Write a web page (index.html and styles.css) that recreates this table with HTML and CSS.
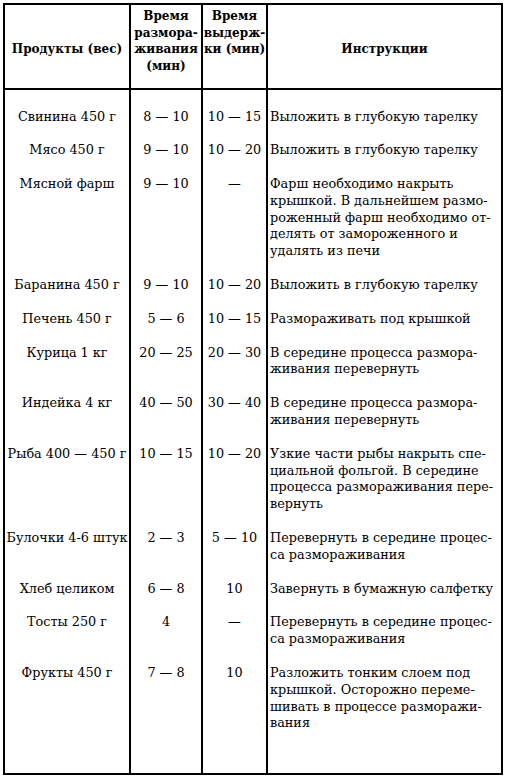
FILE: index.html
```html
<!DOCTYPE html>
<html lang="ru">
<head>
<meta charset="utf-8">
<title>Размораживание</title>
<link rel="stylesheet" href="styles.css">
</head>
<body>
<table class="tbl">
  <colgroup>
    <col class="c1"><col class="c2"><col class="c3"><col class="c4">
  </colgroup>
  <thead>
    <tr class="head">
      <th class="mid">Продукты (вес)</th>
      <th>Время<br>размора-<br>живания<br>(мин)</th>
      <th>Время<br>выдерж-<br>ки (мин)</th>
      <th class="mid">Инструкции</th>
    </tr>
  </thead>
  <tbody>
    <tr class="first"><td>Свинина 450 г</td><td>8 — 10</td><td>10 — 15</td><td class="ins">Выложить в глубокую тарелку</td></tr>
    <tr><td>Мясо 450 г</td><td>9 — 10</td><td>10 — 20</td><td class="ins">Выложить в глубокую тарелку</td></tr>
    <tr><td>Мясной фарш</td><td>9 — 10</td><td>—</td><td class="ins">Фарш необходимо накрыть<br>крышкой. В дальнейшем размо-<br>роженный фарш необходимо от-<br>делять от замороженного и<br>удалять из печи</td></tr>
    <tr><td>Баранина 450 г</td><td>9 — 10</td><td>10 — 20</td><td class="ins">Выложить в глубокую тарелку</td></tr>
    <tr><td>Печень 450 г</td><td>5 — 6</td><td>10 — 15</td><td class="ins">Размораживать под крышкой</td></tr>
    <tr><td>Курица 1 кг</td><td>20 — 25</td><td>20 — 30</td><td class="ins">В середине процесса размора-<br>живания перевернуть</td></tr>
    <tr><td>Индейка 4 кг</td><td>40 — 50</td><td>30 — 40</td><td class="ins">В середине процесса размора-<br>живания перевернуть</td></tr>
    <tr><td>Рыба 400 — 450 г</td><td>10 — 15</td><td>10 — 20</td><td class="ins">Узкие части рыбы накрыть спе-<br>циальной фольгой. В середине<br>процесса размораживания пере-<br>вернуть</td></tr>
    <tr><td>Булочки 4-6 штук</td><td>2 — 3</td><td>5 — 10</td><td class="ins">Перевернуть в середине процес-<br>са размораживания</td></tr>
    <tr><td>Хлеб целиком</td><td>6 — 8</td><td>10</td><td class="ins">Завернуть в бумажную салфетку</td></tr>
    <tr><td>Тосты 250 г</td><td>4</td><td>—</td><td class="ins">Перевернуть в середине процес-<br>са размораживания</td></tr>
    <tr class="last"><td>Фрукты 450 г</td><td>7 — 8</td><td>10</td><td class="ins">Разложить тонким слоем под<br>крышкой. Осторожно переме-<br>шивать в процессе разморажи-<br>вания</td></tr>
  </tbody>
</table>
</body>
</html>
```
FILE: styles.css
```css
html, body {
  margin: 0;
  padding: 0;
  background: #ffffff;
}
body {
  padding: 3px 0 0 3px;
  font-family: "DejaVu Serif", "Liberation Serif", serif;
  font-size: 12px;
  color: #000;
}
.tbl {
  border-collapse: collapse;
  table-layout: fixed;
  width: 498px;
  border: 2px solid #000;
}
.c1 { width: 126px; }
.c2 { width: 72px; }
.c3 { width: 65px; }
.c4 { width: 235px; }
th, td {
  border-left: 2px solid #000;
  border-right: 2px solid #000;
  padding: 0;
  white-space: nowrap;
}
tr.head {
  height: 85px;
}
th {
  font-weight: bold;
  font-size: 12px;
  line-height: 16.7px;
  vertical-align: top;
  text-align: center;
  padding-top: 3px;
  border-bottom: 2px solid #000;
}
th.mid {
  vertical-align: middle;
  padding-top: 6px;
}
td {
  font-size: 12.8px;
  text-align: center;
  vertical-align: top;
  line-height: 16.8px;
  padding-top: 8.5px;
  padding-bottom: 8.5px;
}
td.ins {
  text-align: left;
  padding-left: 2px;
}
tr.first td {
  padding-top: 18.5px;
}
tr.last td {
  padding-bottom: 41px;
}
```
